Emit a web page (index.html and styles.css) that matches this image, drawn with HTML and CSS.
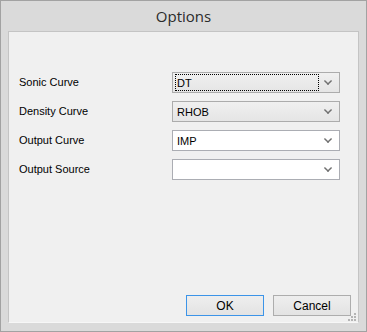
FILE: index.html
```html
<!DOCTYPE html>
<html lang="en">
<head>
    <meta charset="UTF-8">
    <title>Options</title>
    <link rel="stylesheet" href="styles.css">
</head>
<body>
    <div class="window">
        <div class="titlebar">Options</div>

        <div class="client">
            <div class="form">
                <label class="field-label">Sonic Curve</label>
                <div class="combo combo-list">
                    <span class="combo-text focused">DT</span>
                    <span class="combo-arrow"></span>
                </div>

                <label class="field-label">Density Curve</label>
                <div class="combo combo-list">
                    <span class="combo-text">RHOB</span>
                    <span class="combo-arrow"></span>
                </div>

                <label class="field-label">Output Curve</label>
                <div class="combo combo-edit">
                    <span class="combo-text">IMP</span>
                    <span class="combo-arrow"></span>
                </div>

                <label class="field-label">Output Source</label>
                <div class="combo combo-edit">
                    <span class="combo-text"></span>
                    <span class="combo-arrow"></span>
                </div>
            </div>

            <div class="buttons">
                <button class="btn btn-default">OK</button>
                <button class="btn">Cancel</button>
            </div>

            <!-- Size grip -->
            <svg class="grip" width="9" height="9" viewBox="0 0 9 9">
                <rect x="6" y="0" width="2" height="2" fill="#b4b4b4"/>
                <rect x="3" y="3" width="2" height="2" fill="#b4b4b4"/>
                <rect x="6" y="3" width="2" height="2" fill="#b4b4b4"/>
                <rect x="0" y="6" width="2" height="2" fill="#b4b4b4"/>
                <rect x="3" y="6" width="2" height="2" fill="#b4b4b4"/>
                <rect x="6" y="6" width="2" height="2" fill="#b4b4b4"/>
            </svg>
        </div>
    </div>
</body>
</html>
```

FILE: styles.css
```css
/* Global */
body, html {
    margin: 0;
    padding: 0;
    background: #ffffff;
}

/* Window frame */
.window {
    width: 367px;
    height: 332px;
    box-sizing: border-box;
    border: 1px solid #a2a2a2;
    background: #dadada;
    display: flex;
    flex-direction: column;
}

.titlebar {
    height: 30px;
    line-height: 30px;
    text-align: center;
    font-family: 'Open Sans', sans-serif;
    font-size: 15px;
    color: #2b2b2b;
    flex-shrink: 0;
}

/* Client area */
.client {
    flex: 1;
    margin: 0 7px 8px 7px;
    border: 1px solid #c4c4c4;
    border-bottom-color: #f7f7f7;
    background: #f0f0f0;
    display: flex;
    flex-direction: column;
    position: relative;
    font-family: 'Liberation Sans', Arial, sans-serif;
    font-size: 11px;
    color: #000;
}

/* Form grid */
.form {
    display: grid;
    grid-template-columns: 153px 168px;
    row-gap: 8px;
    padding: 40px 0 0 10px;
    align-items: center;
}

.field-label {
    line-height: 21px;
}

.combo {
    height: 21px;
    box-sizing: border-box;
    border: 1px solid #acacac;
    display: flex;
    align-items: center;
    padding: 0 2px;
}

.combo-list {
    background: linear-gradient(to bottom, #f0f0f0, #e5e5e5);
}

.combo-edit {
    background: #ffffff;
    border-color: #abadb3;
}

.combo-text {
    flex: 1;
    height: 17px;
    line-height: 17px;
    padding-left: 1px;
    box-sizing: border-box;
    border: 1px solid transparent;
    margin-right: 5px;
}

.combo-text.focused {
    border: 1px dotted #000;
}

.combo-arrow {
    width: 6px;
    height: 6px;
    border-right: 2px solid #707070;
    border-bottom: 2px solid #707070;
    transform: rotate(45deg) scale(0.72);
    margin: -4px 5px 0 0;
}

/* Buttons */
.buttons {
    margin-top: auto;
    display: flex;
    justify-content: flex-end;
    gap: 9px;
    padding: 0 7px 6px 0;
}

.btn {
    width: 78px;
    height: 21px;
    box-sizing: border-box;
    border: 1px solid #adadad;
    background: linear-gradient(to bottom, #eeeeee, #e3e3e3);
    font-family: 'Liberation Sans', Arial, sans-serif;
    font-size: 12px;
    color: #000;
    padding: 0;
}

.btn-default {
    border-color: #3c94e8;
}

.grip {
    position: absolute;
    right: 1px;
    bottom: 0;
}
```
